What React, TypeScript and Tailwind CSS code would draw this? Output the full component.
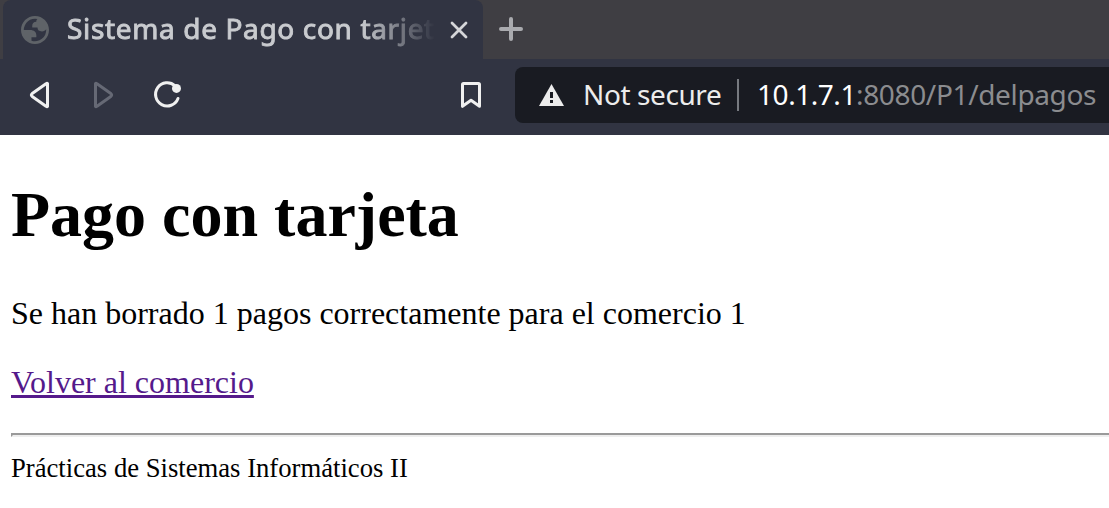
function Globe() {
  return (
    <svg className="h-7 w-7 shrink-0" viewBox="2 2 20 20" fill="#5f6368">
      <path
        fillRule="evenodd"
        d="M12 2C6.480 2 2 6.480 2 12s4.480 10 10 10 10-4.480 10-10S17.520 2 12 2zM4 12h4.400c3.407.022 4.922 1.730 4.543 5.127H9.488v2.470a8.004 8.004 0 0 0 10.498-8.083C19.327 12.504 18.332 13 17 13c-2.137 0-3.206-.916-3.206-2.750h-3.748c-.274-2.728.683-4.092 2.870-4.092 0-.975.327-1.597.811-1.970A8.004 8.004 0 0 0 4 12z"
      />
    </svg>
  );
}

export default function App() {
  return (
    <div className="flex h-[508px] w-full flex-col overflow-hidden bg-white text-black">
      <header className="shrink-0 font-['Noto_Sans',sans-serif]">
        <div className="flex h-[59px] bg-[#3f3e43] pl-[3px]">
          <div className="flex w-[480px] items-center rounded-t-lg bg-[#313442] pl-[18px]">
            <Globe />
            <div className="ml-[18px] w-[368px] pb-[3px] whitespace-nowrap text-[28px] leading-[38px] tracking-[0.650px] text-[#c9cbcf] mask-r-from-80% mask-r-to-100% [-webkit-text-stroke:0.9px_#c9cbcf]">
              Sistema de Pago con tarjeta
            </div>
            <svg className="ml-[14px] h-5 w-5 shrink-0" viewBox="0 0 20 20" fill="none" stroke="#d5d6d9" strokeWidth="2.800" strokeLinecap="round">
              <path d="M3 3 17 17M17 3 3 17" />
            </svg>
          </div>
          <svg className="mt-4 ml-[15px] h-[26px] w-[26px]" viewBox="0 0 26 26" fill="none" stroke="#a9aaae" strokeWidth="4" strokeLinecap="round">
            <path d="M3 13H23M13 3V23" />
          </svg>
        </div>
        <div className="flex h-[76px] bg-[#313442] pt-2">
          <div className="flex h-14 w-[515px] shrink-0 items-center pl-[25px]">
            <svg className="h-8 w-8" viewBox="0 0 32 32" fill="none" stroke="#f0f0f0" strokeWidth="3" strokeLinejoin="round">
              <path d="M22.500 4.500V27.500Q22 28 21 27.200L7.200 17.500Q5.500 16 7.200 14.500L21 4.800Q22 4 22.500 4.500Z" />
            </svg>
            <svg className="ml-8 h-8 w-8" viewBox="0 0 32 32" fill="none" stroke="#666975" strokeWidth="3" strokeLinejoin="round">
              <path d="M6.500 4.500V27.500Q7 28 8 27.200L21.800 17.500Q23.500 16 21.800 14.500L8 4.800Q7 4 6.500 4.500Z" />
            </svg>
            <svg className="ml-[30px] h-8 w-8" viewBox="0 0 32 32" fill="none" stroke="#f0f0f0" strokeWidth="3" strokeLinecap="round">
              <path d="M24 6.800A11.600 11.600 0 1 0 27 19.500" />
              <circle cx="25.500" cy="9.400" r="4.500" fill="#f0f0f0" stroke="none" />
            </svg>
            <svg className="ml-[272px] h-8 w-8" viewBox="0 0 32 32" fill="none" stroke="#f0f0f0" strokeWidth="3" strokeLinejoin="round">
              <path d="M8.500 4.500H23.500Q24.500 4.500 24.500 5.500V27.300L16 21.300L7.500 27.300V5.500Q7.500 4.500 8.500 4.500Z" />
            </svg>
          </div>
          <div className="flex h-14 grow items-center rounded-l-lg bg-[#191b22] pl-6 text-[28px] leading-[38px] whitespace-nowrap">
            <svg className="h-[22px] w-[25px] shrink-0" viewBox="0 0 25 22">
              <path d="M12.500 0 25 22H0Z" fill="#ececec" />
              <path d="M11 8h3v6h-3zM11 16h3v3h-3z" fill="#191b22" />
            </svg>
            <span className="ml-[19px] w-[138px] pb-0.5 tracking-[-0.400px] text-[#ececec]">Not secure</span>
            <span className="ml-4 h-8 w-0.5 shrink-0 bg-[#777a80]" />
            <span className="ml-[18px] pb-0.5 tracking-[-0.350px] text-[#8b8c8f]">
              <span className="tracking-[-0.450px] text-white">10.1.7.1</span>:8080/P1/delpagos
            </span>
          </div>
        </div>
      </header>
      <main className="pt-[43px] pl-[11px] font-['Liberation_Serif',serif] text-[32px] leading-9">
        <h1 className="text-[64px] leading-[74px] font-bold">Pago con tarjeta</h1>
        <p className="mt-[43px]">Se han borrado 1 pagos correctamente para el comercio 1</p>
        <p className="mt-[33px]">
          <a href="#" className="text-[#551a8b] underline decoration-[3px] underline-offset-[2px]">Volver al comercio</a>
        </p>
        <hr className="mt-[33px] border-2 border-r-0 border-t-[#9a9a9a] border-b-[#eeeeee] border-l-[#9a9a9a]" />
        <p className="mt-4 text-[26.667px] leading-[30px]">Prácticas de Sistemas Informáticos II</p>
      </main>
    </div>
  );
}
